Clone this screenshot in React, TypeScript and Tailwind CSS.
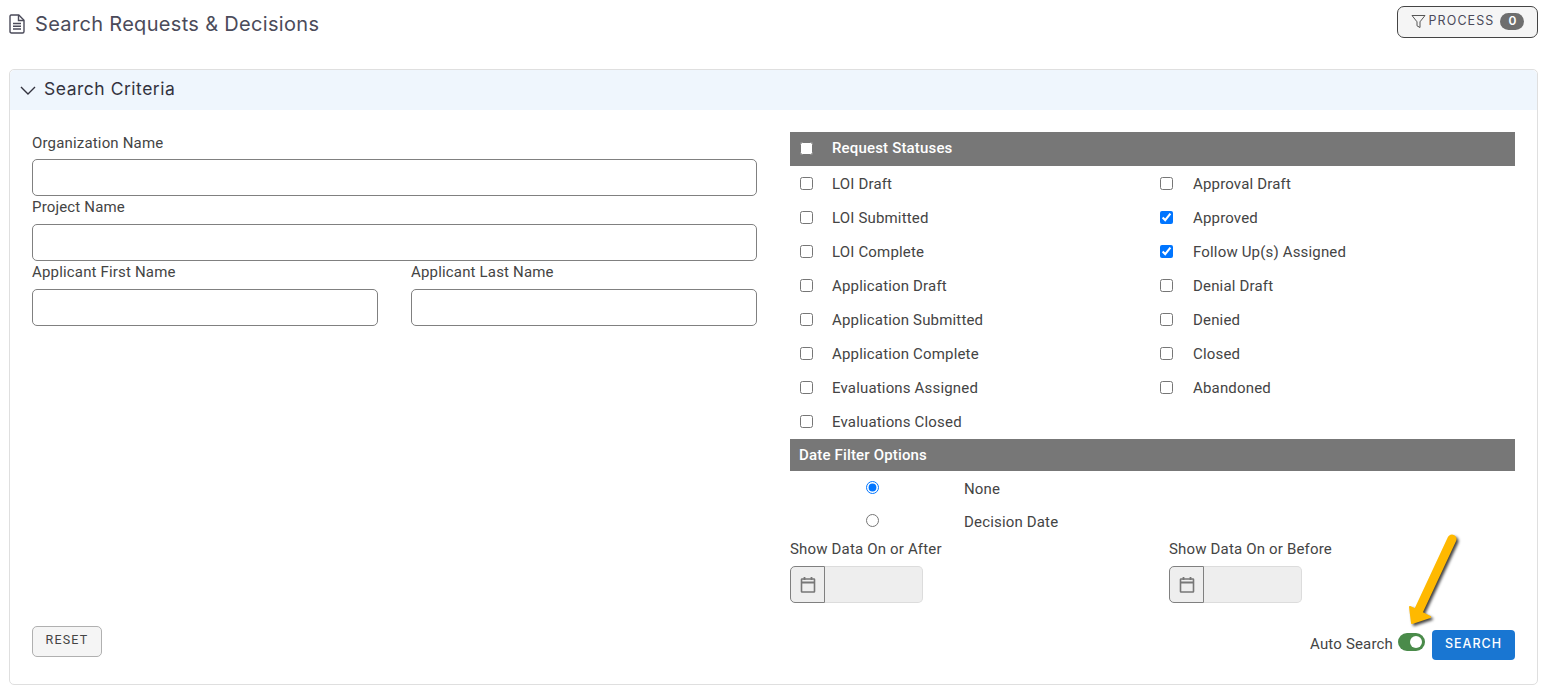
import React from 'react';

const leftStatuses = [
  { label: 'LOI Draft' },
  { label: 'LOI Submitted' },
  { label: 'LOI Complete' },
  { label: 'Application Draft' },
  { label: 'Application Submitted' },
  { label: 'Application Complete' },
  { label: 'Evaluations Assigned' },
  { label: 'Evaluations Closed' },
];

const rightStatuses = [
  { label: 'Approval Draft' },
  { label: 'Approved', checked: true },
  { label: 'Follow Up(s) Assigned', checked: true },
  { label: 'Denial Draft' },
  { label: 'Denied' },
  { label: 'Closed' },
  { label: 'Abandoned' },
];

function Field({ label, first }: { label: string; first?: boolean }) {
  return (
    <div className="flex flex-col">
      <label className={first ? 'mb-[6px] h-[21px] pt-[1px] text-[15px] leading-[21px] tracking-[0.17px] text-[#444444]' : 'mb-[6px] h-[21px] text-[15px] leading-[21px] tracking-[0.17px] text-[#444444]'}>{label}</label>
      <input type="text" className="mb-[1px] h-[37px] w-full rounded-[5px] border border-[#808080] bg-white" />
    </div>
  );
}

function StatusRow({ label, checked, right }: { label: string; checked?: boolean; right?: boolean }) {
  return (
    <label className="flex h-[34px] items-center pl-[10px] text-[15px] tracking-[0.17px] text-[#444444]">
      <input type="checkbox" defaultChecked={checked} className="m-0 h-[13px] w-[13px]" />
      <span className={right ? 'ml-[20px] mt-[3px]' : 'ml-[19px] mt-[3px]'}>{label}</span>
    </label>
  );
}

function DateField({ label }: { label: string }) {
  return (
    <div className="flex flex-col">
      <label className="mb-[7px] h-[21px] pt-[1px] text-[15px] leading-[21px] tracking-[0.17px] text-[#444444]">{label}</label>
      <div className="flex h-[37px] w-[133px]">
        <span className="flex w-[35px] items-center justify-center rounded-l-[5px] border border-[#808080] bg-[#eeeeee]">
          <svg width="16" height="18" viewBox="0 0 16 18" fill="none" stroke="#777777" strokeWidth="1.6">
            <rect x="1.500" y="3" width="13" height="13" rx="0.5" />
            <path d="M1.500 6.500h13M4.500 1v3M11.500 1v3" strokeWidth="1.8" />
          </svg>
        </span>
        <input type="text" disabled className="min-w-0 flex-1 rounded-r-[5px] border border-l-0 border-[#dcdcdc] bg-[#eeeeee]" />
      </div>
    </div>
  );
}

export default function App() {
  return (
    <div className="relative h-[692px] w-full overflow-hidden bg-white px-[9px] font-['Roboto',sans-serif]">
      <div className="-mr-[2px] flex h-[69px] items-start justify-between pt-[6px]">
        <div className="flex items-center pt-[3px]">
          <svg width="16" height="20" viewBox="0 0 16 20" fill="none" stroke="#4b4b5a" strokeWidth="1.4">
            <path d="M2.200 1h7.600L15 6.200v11.300c0 .9-.7 1.500-1.500 1.500h-11C1.600 19 1 18.400 1 17.500v-15C1 1.600 1.400 1 2.200 1z" />
            <path d="M9.500 1v5.500H15M4 9.500h8M4 12.300h8M4 15h8" />
          </svg>
          <h1 className="ml-[10px] font-['Inter',sans-serif] text-[20px] font-normal tracking-[0.32px] text-[#4b4b5a]">
            Search Requests &amp; Decisions
          </h1>
        </div>
        <button className="flex h-[32px] w-[141px] items-center justify-center rounded-[7px] border border-[#444444] bg-[#f5f5f5] pb-[2px] font-['Inter',sans-serif] text-[12.5px] tracking-[1.1px] text-[#4b4b5a]">
          <svg width="15" height="15" viewBox="0 0 15 15" fill="none" stroke="#555555" strokeWidth="1" className="mr-[3px]">
            <path d="M1 1.500h13L9 7.800v5.700L6 11.800v-4z" strokeLinejoin="round" />
          </svg>
          PROCESS
          <span className="ml-[6px] flex h-[17px] w-[24px] items-center justify-center rounded-full bg-[#6e6e6e] text-[12px] font-semibold tracking-normal text-white">0</span>
        </button>
      </div>

      <section className="h-[616px] w-[1529px] rounded-[5px] border border-[#dfdfdf]">
        <div className="flex h-[40px] items-center rounded-t-[5px] bg-[#eff6fd] pl-[10px]">
          <svg width="16" height="9" viewBox="0 0 16 9" fill="none" stroke="#33333f" strokeWidth="1.400">
            <path d="M1 1l7 7 7-7" />
          </svg>
          <h2 className="mb-[2px] ml-[8px] font-['Inter',sans-serif] text-[17.5px] font-normal tracking-[0.52px] text-[#33333f]">Search Criteria</h2>
        </div>

        <div className="px-[22px] pt-[22px]">
          <div className="grid grid-cols-[725px_725px] gap-x-[33px]">
            <div className="flex flex-col">
              <Field label="Organization Name" first />
              <Field label="Project Name" />
              <div className="grid grid-cols-2 gap-x-[33px]">
                <Field label="Applicant First Name" />
                <Field label="Applicant Last Name" />
              </div>
            </div>

            <div className="flex flex-col">
              <div className="flex h-[34px] items-center bg-[#777777] pl-[10px] text-[15px] font-medium tracking-[0.17px] text-white">
                <input type="checkbox" className="m-0 mb-[2px] h-[13px] w-[13px]" />
                <span className="mb-[2px] ml-[19px]">Request Statuses</span>
              </div>
              <div className="grid grid-cols-[360px_365px]">
                <div className="flex flex-col">
                  {leftStatuses.map((s) => (
                    <StatusRow key={s.label} label={s.label} />
                  ))}
                </div>
                <div className="flex flex-col">
                  {rightStatuses.map((s) => (
                    <StatusRow key={s.label} label={s.label} checked={s.checked} right />
                  ))}
                </div>
              </div>
              <div className="mt-[1px] flex h-[32px] items-center bg-[#777777] pl-[9px] text-[15px] font-medium tracking-[0.17px] text-white">
                Date Filter Options
              </div>
              <div className="flex h-[33px] items-center text-[15px] tracking-[0.17px] text-[#444444]">
                <span className="flex w-[164px] justify-center">
                  <input type="radio" name="dateFilter" defaultChecked className="m-0 h-[13px] w-[13px]" />
                </span>
                <span className="ml-[10px] mt-[3px]">None</span>
              </div>
              <div className="flex h-[33px] items-center text-[15px] tracking-[0.17px] text-[#444444]">
                <span className="flex w-[164px] justify-center">
                  <input type="radio" name="dateFilter" className="m-0 h-[13px] w-[13px]" />
                </span>
                <span className="ml-[10px] mt-[3px]">Decision Date</span>
              </div>
              <div className="mt-[1px] grid grid-cols-2 gap-x-[33px]">
                <DateField label="Show Data On or After" />
                <DateField label="Show Data On or Before" />
              </div>
            </div>
          </div>

          <div className="mt-[23px] flex items-start justify-between">
            <button className="h-[31px] w-[70px] rounded-[5px] border border-[#b0b0b0] bg-[#f5f5f5] pb-[2px] text-[12.5px] tracking-[1.2px] text-[#444444]">RESET</button>
            <div className="flex items-center pt-[4px]">
              <span className="mb-[2px] text-[15px] tracking-[0.17px] text-[#444444]">Auto Search</span>
              <span className="mb-[6px] ml-[5px] flex h-[18px] w-[27px] items-center justify-end rounded-full bg-[#4a8b4a] pr-[3px]">
                <span className="h-[12px] w-[12px] rounded-full bg-white" />
              </span>
              <button className="ml-[7px] h-[30px] w-[83px] rounded-[4px] bg-[#1976d2] pb-[2px] font-['Inter',sans-serif] text-[12.5px] font-medium tracking-[1px] text-white">SEARCH</button>
            </div>
          </div>
        </div>
      </section>

      <svg width="60" height="100" viewBox="0 0 60 100" fill="none" className="absolute left-[1405px] top-[530px] drop-shadow-[2px_2px_1.5px_rgba(0,0,0,0.75)]">
        <path d="M47 9L13 82" stroke="#ffb900" strokeWidth="9" strokeLinecap="round" />
        <path d="M7 93L5 77L25 87z" fill="#ffb900" stroke="#ffb900" strokeWidth="2" strokeLinejoin="round" />
      </svg>
    </div>
  );
}
